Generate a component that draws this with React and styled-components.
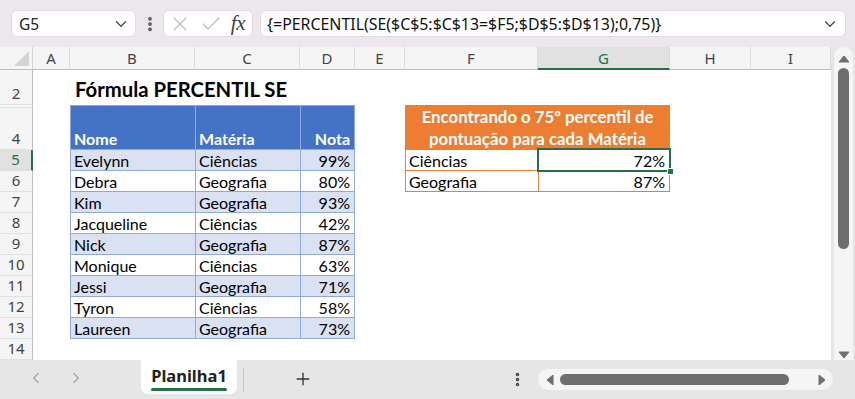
import React from 'react';
import styled, { createGlobalStyle, css } from 'styled-components';
import { ChevronDown, ChevronLeft, ChevronRight, Plus, X, Check, EllipsisVertical } from 'lucide-react';

const COLS = [
  { id: 'A', w: 37 },
  { id: 'B', w: 125 },
  { id: 'C', w: 105 },
  { id: 'D', w: 55 },
  { id: 'E', w: 50 },
  { id: 'F', w: 133 },
  { id: 'G', w: 132 },
  { id: 'H', w: 81 },
  { id: 'I', w: 80 },
];

// row number -> grid row (header is grid row 1, row 1 of the sheet is hidden)
const ROWS = [2, 3, 4, 5, 6, 7, 8, 9, 10, 11, 12, 13, 14];

const STUDENTS = [
  ['Evelynn', 'Ciências', '99%'],
  ['Debra', 'Geografia', '80%'],
  ['Kim', 'Geografia', '93%'],
  ['Jacqueline', 'Ciências', '42%'],
  ['Nick', 'Geografia', '87%'],
  ['Monique', 'Ciências', '63%'],
  ['Jessi', 'Geografia', '71%'],
  ['Tyron', 'Ciências', '58%'],
  ['Laureen', 'Geografia', '73%'],
];

const UI_FONT = '"Noto Sans", "Open Sans", sans-serif';
const CELL_FONT = 'Lato, "Liberation Sans", sans-serif';
const GREEN = '#217346';

const GlobalStyle = createGlobalStyle`
  html, body {
    margin: 0;
    padding: 0;
  }
  body {
    width: 855px;
    height: 399px;
    overflow: hidden;
    background: #e6e6e6;
    font-family: ${UI_FONT};
  }
`;

const place = css`
  grid-column: ${(p) => p.$col} / span ${(p) => p.$cspan || 1};
  grid-row: ${(p) => p.$row} / span ${(p) => p.$rspan || 1};
`;

/* ---------- formula bar ---------- */

const FormulaBar = styled.div`
  height: 47px;
  box-sizing: border-box;
  padding: 10px 9px 10px 11px;
  display: flex;
  align-items: stretch;
  background: #ece7ec;
`;

const Box = styled.div`
  background: #fff;
  border: 1px solid #e2dde2;
  border-radius: 6px;
  box-sizing: border-box;
  display: flex;
  align-items: center;
`;

const NameBox = styled(Box)`
  width: 125px;
  padding: 0 5px 0 7px;
  justify-content: space-between;
  font-size: 15.5px;
  color: #222;
`;

const Dots = styled.div`
  width: 27px;
  display: flex;
  align-items: center;
  justify-content: center;
  color: #555;
`;

const FxBox = styled(Box)`
  width: 90px;
  padding: 0 4px 0 4px;
  justify-content: space-between;
  color: #b8b8b8;
`;

const Fx = styled.span`
  font-family: "Liberation Serif", serif;
  font-style: italic;
  font-size: 21px;
  color: #404040;
  margin-right: 3px;
  letter-spacing: -0.5px;
`;

const FormulaBox = styled(Box)`
  flex: 1;
  margin-left: 7px;
  padding: 0 6px 0 6px;
  justify-content: space-between;
  font-size: 15.9px;
  color: #111;
`;

/* ---------- sheet ---------- */

const Main = styled.div`
  display: flex;
  height: 313px;
`;

const Sheet = styled.div`
  display: grid;
  grid-template-columns: 33px ${COLS.map((c) => `${c.w}px`).join(' ')};
  grid-template-rows: 23px 35px 3px 42px repeat(10, 21px);
  width: 831px;
  background: #fff;
  overflow: hidden;
`;

const Corner = styled.div`
  ${place};
  background: #f5f5f5;
  border-right: 1px solid #d4d4d4;
  border-bottom: 1px solid #bdbdbd;
  display: flex;
  align-items: flex-end;
  justify-content: flex-end;
  padding: 0 3px 3px 0;
`;

const ColHead = styled.div`
  ${place};
  display: flex;
  align-items: center;
  justify-content: center;
  font-size: 15px;
  background: ${(p) => (p.$active ? '#e1e1e1' : '#f5f5f5')};
  color: ${(p) => (p.$active ? GREEN : '#444')};
  border-right: 1px solid #dcdcdc;
  border-bottom: ${(p) => (p.$active ? `2px solid ${GREEN}` : '1px solid #bdbdbd')};
`;

const RowHead = styled.div`
  ${place};
  display: flex;
  align-items: flex-end;
  justify-content: center;
  padding-bottom: 1px;
  font-size: 15px;
  line-height: 19px;
  overflow: hidden;
  background: ${(p) => (p.$active ? '#e1e1e1' : '#f5f5f5')};
  color: ${(p) => (p.$active ? GREEN : '#444')};
  border-right: ${(p) => (p.$active ? `2px solid ${GREEN}` : '1px solid #bdbdbd')};
  border-bottom: 1px solid #e1e1e1;
`;

const Title = styled.div`
  ${place};
  align-self: end;
  padding: 0 0 4px 5px;
  font-family: ${CELL_FONT};
  font-weight: 700;
  font-size: 20.3px;
  white-space: nowrap;
  color: #000;
`;

const Table = styled.div`
  ${place};
  display: grid;
  grid-template-columns: ${(p) => p.$cols};
  grid-template-rows: ${(p) => p.$rows};
  gap: 1px;
  border: 1px solid ${(p) => p.$line};
  background: ${(p) => p.$line};
  box-sizing: border-box;
  overflow: visible;
  font-family: ${CELL_FONT};
  font-size: 16px;
  color: #000;
`;

const BlueHead = styled.div`
  background: #4472c4;
  color: #fff;
  font-weight: 700;
  display: flex;
  align-items: flex-end;
  justify-content: ${(p) => (p.$right ? 'flex-end' : 'flex-start')};
  padding: 0 4px 1px 3px;
`;

const DataCell = styled.div`
  position: relative;
  background: ${(p) => (p.$band ? '#d9e1f2' : '#fff')};
  display: flex;
  align-items: flex-end;
  justify-content: ${(p) => (p.$right ? 'flex-end' : 'flex-start')};
  padding: 0 4px 0 3px;
  line-height: 19px;
  white-space: nowrap;
  ${(p) =>
    p.$selected &&
    css`
      z-index: 1;
      outline: 2px solid ${GREEN};
      outline-offset: 0;
      &::after {
        content: '';
        position: absolute;
        right: -5px;
        bottom: -5px;
        width: 5px;
        height: 5px;
        background: ${GREEN};
        border: 1px solid #fff;
      }
    `}
`;

const OrangeHead = styled.div`
  grid-column: 1 / span 2;
  background: #ed7d31;
  color: #fff;
  font-weight: 700;
  font-size: 16.8px;
  text-align: center;
  line-height: 22px;
  white-space: nowrap;
  overflow: hidden;
`;

/* ---------- vertical scrollbar ---------- */

const VScroll = styled.div`
  width: 24px;
  box-sizing: border-box;
  padding-left: 3px;
  padding-right: 2px;
  background: #e6e6e6;
`;

const VTrack = styled.div`
  height: 100%;
  background: #f5f5f5;
  border-radius: 10px 10px 0 0;
  display: flex;
  flex-direction: column;
  align-items: center;
  padding-top: 7px;
  box-sizing: border-box;
`;

const VThumb = styled.div`
  width: 11px;
  height: 181px;
  margin-top: 4px;
  border-radius: 6px;
  background: #6e6e6e;
`;

const Spacer = styled.div`
  flex: 1;
`;

/* ---------- bottom bar ---------- */

const BottomBar = styled.div`
  height: 39px;
  display: flex;
  align-items: flex-start;
  background: #e6e6e6;
`;

const Nav = styled.div`
  width: 141px;
  height: 36px;
  display: flex;
  align-items: center;
  padding-left: 27px;
  gap: 22px;
  box-sizing: border-box;
  color: #a0a0a0;
`;

const Tab = styled.div`
  width: 96px;
  height: 34px;
  background: #fff;
  border-radius: 0 0 7px 7px;
  display: flex;
  flex-direction: column;
  align-items: center;
  justify-content: center;
  font-weight: 700;
  font-size: 16.5px;
  line-height: 22px;
  color: #222;
  gap: 1px;
  padding-top: 1px;
  box-sizing: border-box;
`;

const TabLine = styled.div`
  width: 76px;
  height: 3px;
  border-radius: 2px;
  background: ${GREEN};
`;

const TabSep = styled.div`
  width: 1px;
  height: 24px;
  margin: 8px 0 0 6px;
  background: #c8c8c8;
`;

const AddButton = styled.div`
  margin: 9px 0 0 49px;
  color: #333;
  display: flex;
`;

const MoreButton = styled.div`
  margin: 11px 0 0 auto;
  color: #444;
  display: flex;
`;

const HTrack = styled.div`
  width: 295px;
  height: 21px;
  margin: 9px 22px 0 12px;
  border-radius: 11px;
  background: #f5f5f5;
  display: flex;
  align-items: center;
  padding: 0 6px 0 7px;
  box-sizing: border-box;
`;

const HThumb = styled.div`
  width: 229px;
  height: 11px;
  border-radius: 6px;
  background: #6e6e6e;
  margin-left: 5px;
`;

function Arrow({ dir }) {
  const pts = {
    up: '0,8 5,2 10,8',
    down: '0,2 5,8 10,2',
    left: '8,0 2,5 8,10',
    right: '2,0 8,5 2,10',
  }[dir];
  return (
    <svg width="10" height="10" viewBox="0 0 10 10">
      <polygon points={pts} fill="#6e6e6e" strokeLinejoin="round" stroke="#6e6e6e" strokeWidth="1" />
    </svg>
  );
}

function CornerMark() {
  return (
    <svg width="15" height="15" viewBox="0 0 15 15">
      <polygon points="15,0 15,15 0,15" fill="#d4d4d4" />
    </svg>
  );
}

export default function App() {
  return (
    <>
      <GlobalStyle />
      <FormulaBar>
        <NameBox>
          <span>G5</span>
          <ChevronDown size={18} strokeWidth={1.6} color="#444" />
        </NameBox>
        <Dots>
          <EllipsisVertical size={18} strokeWidth={3} />
        </Dots>
        <FxBox>
          <X size={24} strokeWidth={1.1} />
          <Check size={24} strokeWidth={1.1} />
          <Fx>fx</Fx>
        </FxBox>
        <FormulaBox>
          <span>{'{=PERCENTIL(SE($C$5:$C$13=$F5;$D$5:$D$13);0,75)}'}</span>
          <ChevronDown size={18} strokeWidth={1.6} color="#444" />
        </FormulaBox>
      </FormulaBar>

      <Main>
        <Sheet>
          <Corner $col={1} $row={1}>
            <CornerMark />
          </Corner>
          {COLS.map((c, i) => (
            <ColHead key={c.id} $col={i + 2} $row={1} $active={c.id === 'G'}>
              {c.id}
            </ColHead>
          ))}
          {ROWS.map((n) => (
            <RowHead key={n} $col={1} $row={n} $active={n === 5}>
              {n === 3 ? '' : n}
            </RowHead>
          ))}

          <Title $col={3} $cspan={4} $row={2}>
            Fórmula PERCENTIL SE
          </Title>

          <Table
            $col={3}
            $cspan={3}
            $row={3}
            $rspan={11}
            $cols="124px 104px 1fr"
            $rows="minmax(0, 1fr) repeat(9, 20px)"
            $line="#8ea9db"
          >
            <BlueHead>Nome</BlueHead>
            <BlueHead>Matéria</BlueHead>
            <BlueHead $right>Nota</BlueHead>
            {STUDENTS.map(([name, subject, grade], i) => (
              <React.Fragment key={name}>
                <DataCell $band={i % 2 === 0}>{name}</DataCell>
                <DataCell $band={i % 2 === 0}>{subject}</DataCell>
                <DataCell $band={i % 2 === 0} $right>
                  {grade}
                </DataCell>
              </React.Fragment>
            ))}
          </Table>

          <Table
            $col={7}
            $cspan={2}
            $row={3}
            $rspan={4}
            $cols="132px 1fr"
            $rows="minmax(0, 1fr) 20px 20px"
            $line="#ed7d31"
          >
            <OrangeHead>
              Encontrando o 75º percentil de
              <br />
              pontuação para cada Matéria
            </OrangeHead>
            <DataCell>Ciências</DataCell>
            <DataCell $right $selected>
              72%
            </DataCell>
            <DataCell>Geografia</DataCell>
            <DataCell $right>87%</DataCell>
          </Table>
        </Sheet>

        <VScroll>
          <VTrack>
            <Arrow dir="up" />
            <VThumb />
            <Spacer />
            <Arrow dir="down" />
          </VTrack>
        </VScroll>
      </Main>

      <BottomBar>
        <Nav>
          <ChevronLeft size={18} strokeWidth={1.5} />
          <ChevronRight size={18} strokeWidth={1.5} />
        </Nav>
        <Tab>
          <span>Planilha1</span>
          <TabLine />
        </Tab>
        <TabSep />
        <AddButton>
          <Plus size={20} strokeWidth={1.6} />
        </AddButton>
        <MoreButton>
          <EllipsisVertical size={17} strokeWidth={3} />
        </MoreButton>
        <HTrack>
          <Arrow dir="left" />
          <HThumb />
          <Spacer />
          <Arrow dir="right" />
        </HTrack>
      </BottomBar>
    </>
  );
}
